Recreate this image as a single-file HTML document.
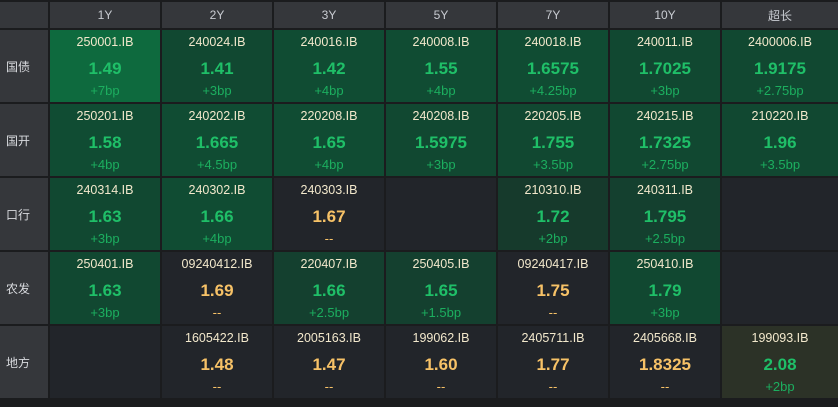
<!DOCTYPE html><html><head><meta charset="utf-8"><style>
body{margin:0;width:838px;height:407px;background:#1b1c1e;font-family:"Liberation Sans","Noto Sans CJK SC",sans-serif;overflow:hidden}
.g{display:grid;grid-template-columns:48px repeat(6,110px) 116px;grid-template-rows:26px repeat(5,72px);gap:2px;padding-top:2px}
.h{background:#35373b;color:#c9ccd2;font-size:12px;display:flex;align-items:center;justify-content:center}
.l{background:#35373b;color:#d8dade;font-size:12px;display:flex;align-items:center;padding-left:6px}
.c{background:#22252a;text-align:center;position:relative}
.c .a{position:absolute;top:5px;left:0;right:0;font-size:12.5px;color:#f2e8cc}
.c .v{position:absolute;top:29px;left:0;right:0;font-size:17px;font-weight:bold;color:#1fbf68}
.c .b{position:absolute;top:53px;left:0;right:0;font-size:13px;color:#1cae5f}
.o .v,.o .b{color:#f7c267}
.s1{background:#0e6a3e}.s2{background:#104c33}.s3{background:#114831}.s4{background:#14402f}.s5{background:#163a2c}.ol{background:#2c3227}
</style></head><body><div class="g">
<div class="h"></div><div class="h">1Y</div><div class="h">2Y</div><div class="h">3Y</div><div class="h">5Y</div><div class="h">7Y</div><div class="h">10Y</div><div class="h">超长</div>
<div class="l">国债</div>
<div class="c s1"><div class="a">250001.IB</div><div class="v">1.49</div><div class="b">+7bp</div></div>
<div class="c s3"><div class="a">240024.IB</div><div class="v">1.41</div><div class="b">+3bp</div></div>
<div class="c s2"><div class="a">240016.IB</div><div class="v">1.42</div><div class="b">+4bp</div></div>
<div class="c s2"><div class="a">240008.IB</div><div class="v">1.55</div><div class="b">+4bp</div></div>
<div class="c s2"><div class="a">240018.IB</div><div class="v">1.6575</div><div class="b">+4.25bp</div></div>
<div class="c s3"><div class="a">240011.IB</div><div class="v">1.7025</div><div class="b">+3bp</div></div>
<div class="c s3"><div class="a">2400006.IB</div><div class="v">1.9175</div><div class="b">+2.75bp</div></div>
<div class="l">国开</div>
<div class="c s2"><div class="a">250201.IB</div><div class="v">1.58</div><div class="b">+4bp</div></div>
<div class="c s2"><div class="a">240202.IB</div><div class="v">1.665</div><div class="b">+4.5bp</div></div>
<div class="c s2"><div class="a">220208.IB</div><div class="v">1.65</div><div class="b">+4bp</div></div>
<div class="c s3"><div class="a">240208.IB</div><div class="v">1.5975</div><div class="b">+3bp</div></div>
<div class="c s3"><div class="a">220205.IB</div><div class="v">1.755</div><div class="b">+3.5bp</div></div>
<div class="c s3"><div class="a">240215.IB</div><div class="v">1.7325</div><div class="b">+2.75bp</div></div>
<div class="c s3"><div class="a">210220.IB</div><div class="v">1.96</div><div class="b">+3.5bp</div></div>
<div class="l">口行</div>
<div class="c s3"><div class="a">240314.IB</div><div class="v">1.63</div><div class="b">+3bp</div></div>
<div class="c s2"><div class="a">240302.IB</div><div class="v">1.66</div><div class="b">+4bp</div></div>
<div class="c o"><div class="a">240303.IB</div><div class="v">1.67</div><div class="b">--</div></div>
<div class="c"></div>
<div class="c s5"><div class="a">210310.IB</div><div class="v">1.72</div><div class="b">+2bp</div></div>
<div class="c s4"><div class="a">240311.IB</div><div class="v">1.795</div><div class="b">+2.5bp</div></div>
<div class="c"></div>
<div class="l">农发</div>
<div class="c s3"><div class="a">250401.IB</div><div class="v">1.63</div><div class="b">+3bp</div></div>
<div class="c o"><div class="a">09240412.IB</div><div class="v">1.69</div><div class="b">--</div></div>
<div class="c s4"><div class="a">220407.IB</div><div class="v">1.66</div><div class="b">+2.5bp</div></div>
<div class="c s4"><div class="a">250405.IB</div><div class="v">1.65</div><div class="b">+1.5bp</div></div>
<div class="c o"><div class="a">09240417.IB</div><div class="v">1.75</div><div class="b">--</div></div>
<div class="c s3"><div class="a">250410.IB</div><div class="v">1.79</div><div class="b">+3bp</div></div>
<div class="c"></div>
<div class="l">地方</div>
<div class="c"></div>
<div class="c o"><div class="a">1605422.IB</div><div class="v">1.48</div><div class="b">--</div></div>
<div class="c o"><div class="a">2005163.IB</div><div class="v">1.47</div><div class="b">--</div></div>
<div class="c o"><div class="a">199062.IB</div><div class="v">1.60</div><div class="b">--</div></div>
<div class="c o"><div class="a">2405711.IB</div><div class="v">1.77</div><div class="b">--</div></div>
<div class="c o"><div class="a">2405668.IB</div><div class="v">1.8325</div><div class="b">--</div></div>
<div class="c ol"><div class="a">199093.IB</div><div class="v">2.08</div><div class="b">+2bp</div></div>
</div></body></html>
